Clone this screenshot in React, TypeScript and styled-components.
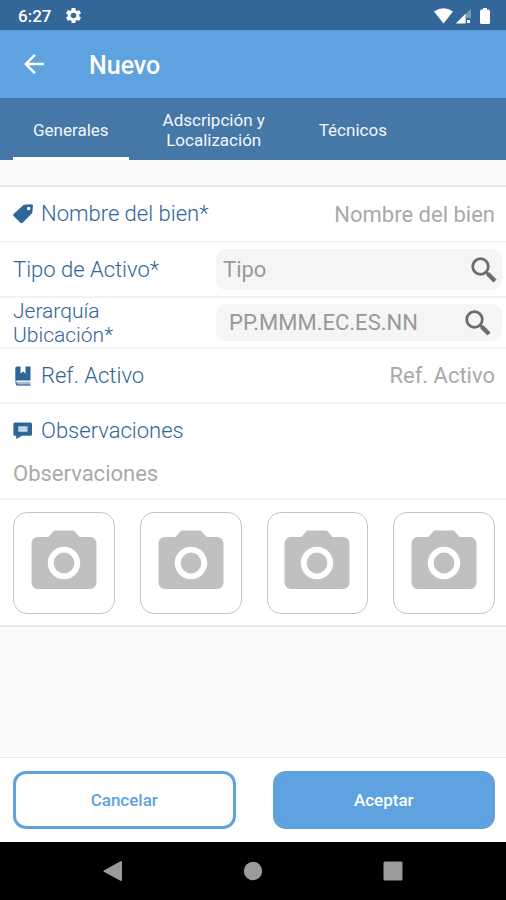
import React from 'react';
import styled, { createGlobalStyle } from 'styled-components';
import { MdArrowBack, MdCameraAlt, MdSettings } from 'react-icons/md';

const color = {
  status: '#346799',
  header: '#5ea2df',
  tabs: '#4577a7',
  label: '#2f6599',
  placeholder: '#a9a9a9',
  line: '#f3f3f3',
  edge: '#e8e8e8',
  page: '#fafafa',
};

const GlobalStyle = createGlobalStyle`
  * { box-sizing: border-box; }
  body { margin: 0; background: ${color.page}; }
  body, input, textarea, button { font-family: Roboto, 'Liberation Sans', sans-serif; }
  svg { display: block; flex: none; }
`;

const Screen = styled.div`
  display: flex;
  flex-direction: column;
  min-height: 100vh;
  background: ${color.page};
`;

const StatusBar = styled.div`
  display: flex;
  align-items: center;
  justify-content: space-between;
  height: 30px;
  padding: 1px 15px 0 18px;
  background: ${color.status};
  color: #fff;
  font-size: 17px;
  font-weight: 500;
`;

const StatusGroup = styled.div<{ $gap: number }>`
  display: flex;
  align-items: center;
  gap: ${(p) => p.$gap}px;
`;

const Header = styled.header`
  display: flex;
  align-items: center;
  gap: 40px;
  height: 68px;
  padding: 0 19px;
  background: ${color.header};
  color: #fff;
`;

const IconButton = styled.button`
  display: flex;
  align-items: center;
  justify-content: center;
  padding: 0;
  border: 0;
  background: none;
  color: inherit;
  cursor: pointer;
`;

const Title = styled.h1`
  margin: 0;
  padding-top: 4px;
  font-size: 25px;
  font-weight: 500;
  line-height: 32px;
`;

const Tabs = styled.nav`
  display: flex;
  gap: 14px;
  height: 62px;
  padding: 0 13px;
  background: ${color.tabs};
`;

const Tab = styled.button<{ $active?: boolean }>`
  padding: 5px 20px 0;
  border: 0;
  border-bottom: 3px solid ${(p) => (p.$active ? '#fff' : 'transparent')};
  background: none;
  color: #f2f7fc;
  font-size: 17px;
  line-height: 20px;
  text-align: center;
  cursor: pointer;
`;

const Form = styled.form`
  display: flex;
  flex: 1;
  flex-direction: column;
`;

const Fields = styled.div`
  margin-top: 25px;
  border-top: 2px solid ${color.edge};
  border-bottom: 2px solid ${color.edge};
  background: #fff;
`;

const Row = styled.div<{ $height: number; $inset?: boolean }>`
  display: grid;
  grid-template-columns: ${(p) => (p.$inset ? '203px 1fr' : 'auto 1fr')};
  align-items: center;
  height: ${(p) => p.$height}px;
  padding: 0 ${(p) => (p.$inset ? 4 : 11)}px 0 13px;
  border-bottom: 2px solid ${color.line};
`;

const Label = styled.label<{ $small?: boolean }>`
  display: flex;
  align-items: center;
  gap: 8px;
  color: ${color.label};
  font-size: ${(p) => (p.$small ? 21 : 22)}px;
  font-weight: 300;
  line-height: 24px;
`;

const TextInput = styled.input<{ $align?: 'right'; $dark?: boolean }>`
  width: 100%;
  min-width: 0;
  padding: 0;
  border: 0;
  outline: 0;
  background: none;
  color: #444;
  font-size: 22px;
  text-align: ${(p) => p.$align ?? 'left'};
  &::placeholder { color: ${(p) => (p.$dark ? '#989898' : color.placeholder)}; opacity: 1; }
`;

const SearchBox = styled.div<{ $height: number; $pad: number; $end: number }>`
  display: flex;
  align-items: center;
  height: ${(p) => p.$height}px;
  padding: 0 ${(p) => p.$end}px 0 ${(p) => p.$pad}px;
  border-radius: 10px;
  background: #f5f5f5;
  color: #6c6c6c;
`;

const Notes = styled.div`
  display: flex;
  flex-direction: column;
  gap: 18px;
  padding: 15px 13px 11px;
  border-bottom: 2px solid ${color.line};
`;

const NotesInput = styled.textarea`
  height: 26px;
  padding: 0;
  border: 0;
  outline: 0;
  resize: none;
  overflow: hidden;
  color: #444;
  font-size: 22px;
  line-height: 26px;
  &::placeholder { color: ${color.placeholder}; opacity: 1; }
`;

const Photos = styled.div`
  display: grid;
  grid-template-columns: repeat(4, 1fr);
  gap: 25px;
  padding: 12px 11px 11px 13px;
`;

const PhotoButton = styled(IconButton)`
  aspect-ratio: 1;
  border: 1px solid #c4c4c4;
  border-radius: 14px;
  color: #c0c0c0;
`;

const Footer = styled.footer`
  display: grid;
  grid-template-columns: 1fr 1fr;
  gap: 37px;
  margin-top: auto;
  padding: 13px 11px 13px 13px;
  border-top: 1px solid ${color.edge};
  background: #fff;
`;

const Action = styled.button<{ $filled?: boolean }>`
  height: 58px;
  border: 3px solid ${color.header};
  border-radius: 13px;
  background: ${(p) => (p.$filled ? color.header : '#fff')};
  color: ${(p) => (p.$filled ? '#fff' : color.header)};
  font-size: 17px;
  font-weight: 500;
  cursor: pointer;
`;

const SystemBar = styled.nav`
  display: flex;
  align-items: center;
  justify-content: center;
  gap: 120px;
  height: 58px;
  background: #000;
  color: #9b9b9b;
`;

const SearchIcon = () => (
  <svg width="26" height="26" viewBox="0 0 26 26" fill="none" stroke="currentColor">
    <circle cx="9.5" cy="9.5" r="7.8" strokeWidth="2.8" />
    <path d="M15 15l2.5 2.5" strokeWidth="2.8" />
    <path d="M16.8 16.8l7.2 7.2" strokeWidth="4.4" />
  </svg>
);

const TagIcon = () => (
  <svg width="20" height="20" viewBox="0 0 20 20" fill="currentColor">
    <path
      fillRule="evenodd"
      d="M11.3.8 18.5.2Q20 .2 20 1.7L19.3 8.6 18.8 9.6 9.4 18.9Q8.4 19.6 7.4 18.8L.6 12Q-.3 11 .6 10L10.2 1.3ZM15.7 2.8a1.7 1.7 0 1 0 0 3.4 1.7 1.7 0 0 0 0-3.4Z"
    />
  </svg>
);

const BookIcon = () => (
  <svg width="20" height="20" viewBox="0 0 20 20" fill="currentColor">
    <path d="M4 .5H7.5V7.5L10 5.6 12.5 7.5V.5H17.5V14.5H4.2Q2.4 14.8 2.3 16.5V2.3Q2.3.5 4 .5Z" />
    <path d="M4.5 15.8H17.5V19.5H4.5Q2.6 19.4 2.6 17.6 2.8 15.9 4.5 15.8Z" opacity=".45" />
    <path d="M2.3 16.5Q2.5 19.2 4.5 19.5H17.5V18.5H5Q3.5 18.2 3.6 16Z" />
  </svg>
);

const CommentIcon = () => (
  <svg width="20" height="20" viewBox="0 0 20 20">
    <path
      d="M2 1.5H17.3Q19 1.5 19 3.2V13.2Q19 14.8 17.3 14.8H9L3.2 18V14.8H2Q.4 14.8.4 13.2V3.2Q.4 1.5 2 1.5Z"
      fill="currentColor"
    />
    <path d="M5.2 5.2H14.6V10.9H5.2Z" fill="#b4cbe0" />
    <path d="M6.4 7H13.4M6.4 9.2H13.4" stroke="#d9e5f0" />
  </svg>
);

const App = () => (
  <>
    <GlobalStyle />
    <Screen>
      <StatusBar>
        <StatusGroup $gap={13}>
          <span>6:27</span>
          <MdSettings size={19} />
        </StatusGroup>
        <StatusGroup $gap={3}>
          <svg width="19" height="16" viewBox="0 0 19 16" fill="#fff">
            <path d="M0 3.6Q9.5-3 19 3.6L9.5 15.6Z" />
          </svg>
          <svg width="16" height="16" viewBox="0 0 16 16" fill="#fff">
            <path d="M15 1V10H10V15H0Z" opacity=".35" />
            <path d="M9.5 5.8V15.5H0ZM11 12H14V15H11Z" />
          </svg>
          <svg width="16" height="18" viewBox="0 0 16 18" fill="#fff">
            <path d="M8 1H12V2.5H13.3Q15 2.5 15 4.2V15.5Q15 17 13.5 17H6.5Q5 17 5 15.5V4.2Q5 2.5 6.7 2.5H8Z" />
          </svg>
        </StatusGroup>
      </StatusBar>

      <Header>
        <IconButton type="button" aria-label="Volver">
          <MdArrowBack size={30} />
        </IconButton>
        <Title>Nuevo</Title>
      </Header>

      <Tabs>
        <Tab type="button" $active>Generales</Tab>
        <Tab type="button">Adscripción y<br />Localización</Tab>
        <Tab type="button">Técnicos</Tab>
      </Tabs>

      <Form onSubmit={(e) => e.preventDefault()}>
        <Fields>
          <Row $height={56}>
            <Label htmlFor="nombre"><TagIcon />Nombre del bien*</Label>
            <TextInput id="nombre" placeholder="Nombre del bien" $align="right" />
          </Row>
          <Row $height={55} $inset>
            <Label htmlFor="tipo">Tipo de Activo*</Label>
            <SearchBox $height={41} $pad={7} $end={5}>
              <TextInput id="tipo" placeholder="Tipo" $dark />
              <IconButton type="button" aria-label="Buscar tipo"><SearchIcon /></IconButton>
            </SearchBox>
          </Row>
          <Row $height={51} $inset>
            <Label htmlFor="jerarquia" $small>Jerarquía<br />Ubicación*</Label>
            <SearchBox $height={37} $pad={13} $end={11}>
              <TextInput id="jerarquia" placeholder="PP.MMM.EC.ES.NN" $dark />
              <IconButton type="button" aria-label="Buscar jerarquía"><SearchIcon /></IconButton>
            </SearchBox>
          </Row>
          <Row $height={55}>
            <Label htmlFor="referencia"><BookIcon />Ref. Activo</Label>
            <TextInput id="referencia" placeholder="Ref. Activo" $align="right" />
          </Row>
          <Notes>
            <Label htmlFor="observaciones"><CommentIcon />Observaciones</Label>
            <NotesInput id="observaciones" rows={1} placeholder="Observaciones" />
          </Notes>
          <Photos>
            {[1, 2, 3, 4].map((n) => (
              <PhotoButton key={n} type="button" aria-label={`Foto ${n}`}>
                <MdCameraAlt size={78} />
              </PhotoButton>
            ))}
          </Photos>
        </Fields>

        <Footer>
          <Action type="button">Cancelar</Action>
          <Action type="submit" $filled>Aceptar</Action>
        </Footer>
      </Form>

      <SystemBar>
        <IconButton type="button" aria-label="Atrás">
          <svg width="20" height="20" viewBox="0 0 20 20" fill="currentColor">
            <path d="M18 0Q19 0 19 1V19Q19 20 18 20L.8 10.8Q0 10 .8 9.4Z" />
          </svg>
        </IconButton>
        <IconButton type="button" aria-label="Inicio">
          <svg width="20" height="20" viewBox="0 0 20 20" fill="currentColor">
            <circle cx="10" cy="10" r="9.2" />
          </svg>
        </IconButton>
        <IconButton type="button" aria-label="Recientes">
          <svg width="20" height="20" viewBox="0 0 20 20" fill="currentColor">
            <rect x=".5" y=".5" width="19" height="19" rx="1.5" />
          </svg>
        </IconButton>
      </SystemBar>
    </Screen>
  </>
);

export default App;
